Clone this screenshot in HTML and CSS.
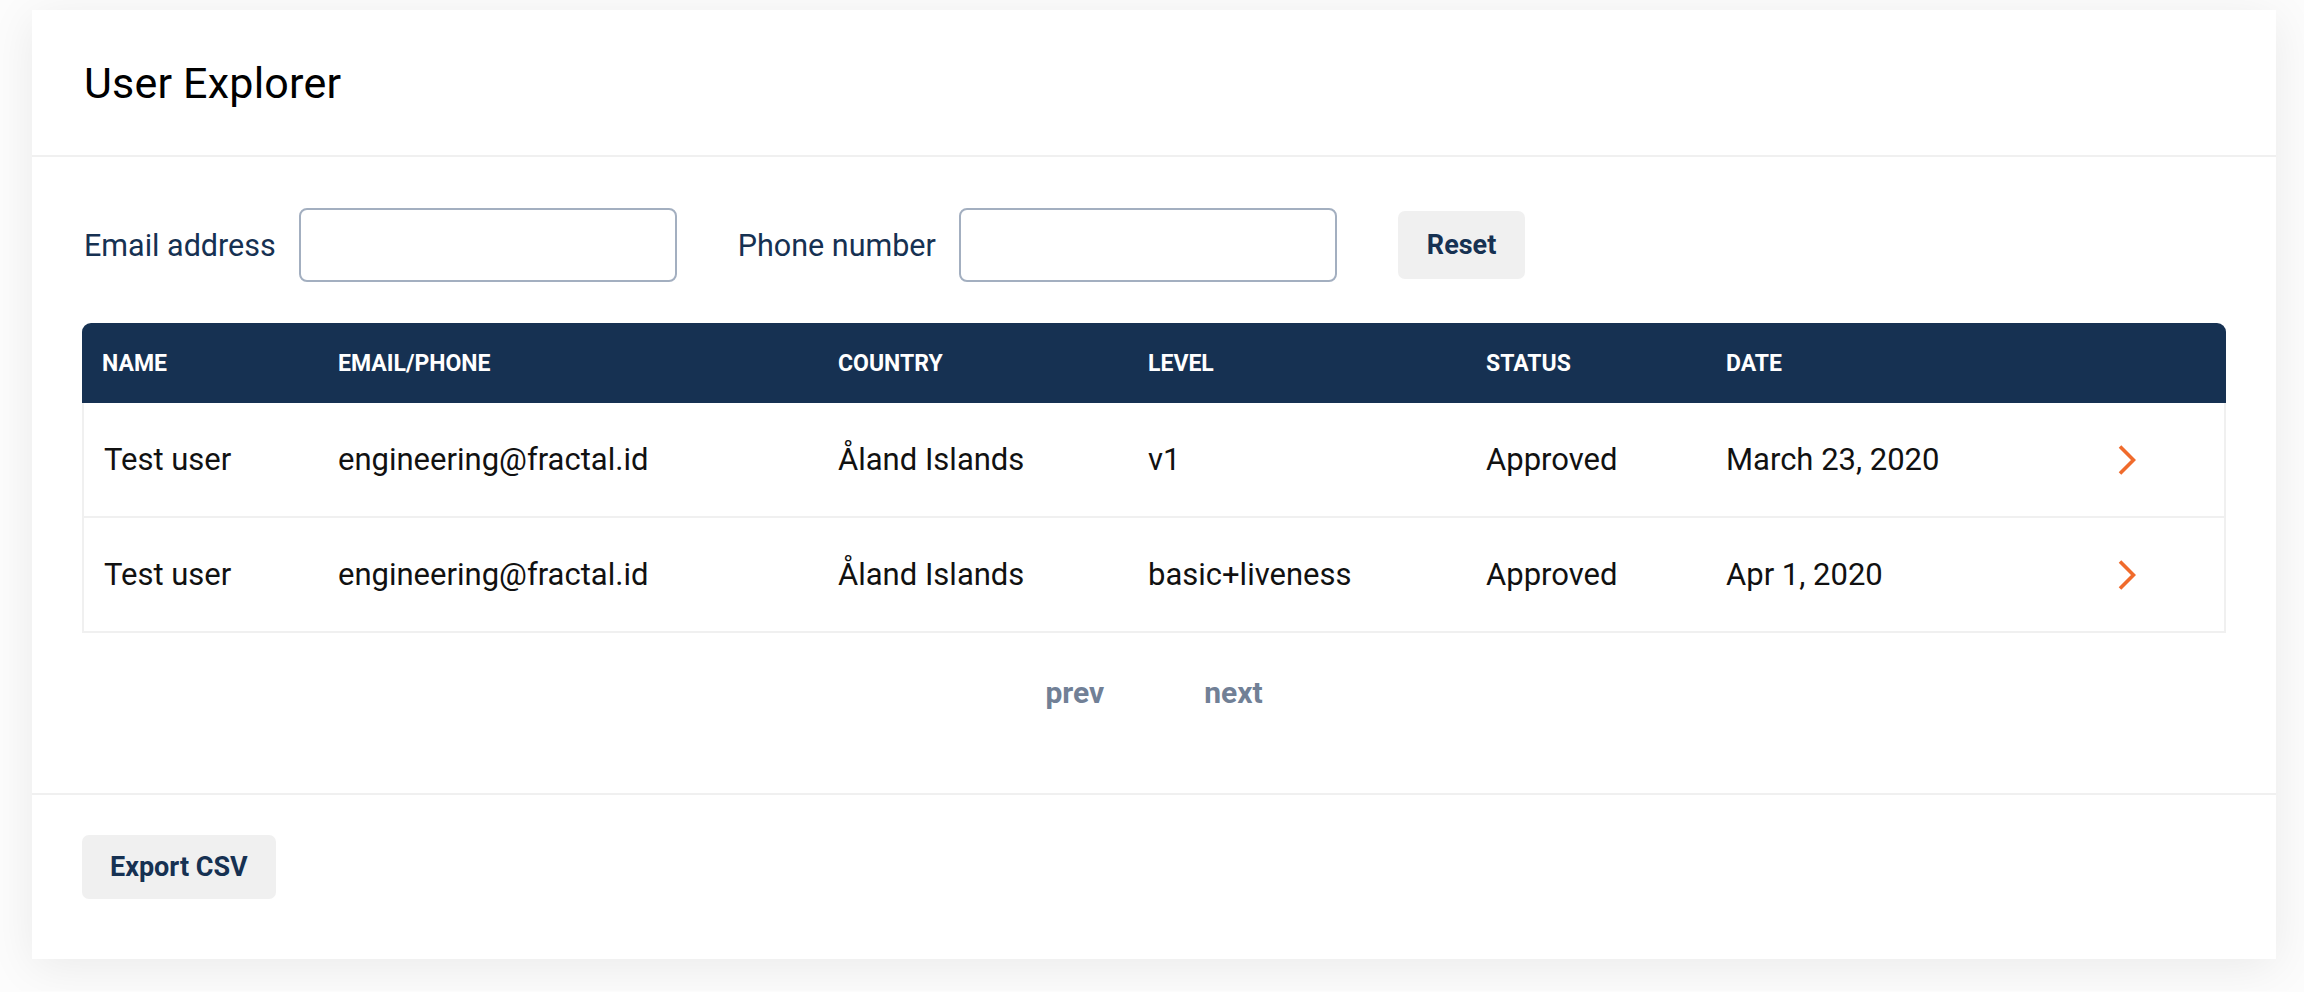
FILE: index.html
```html
<!DOCTYPE html>
<html lang="en">
<head>
<meta charset="utf-8">
<title>User Explorer</title>
<link rel="stylesheet" href="styles.css">
</head>
<body>
<div class="card">
  <header class="card-header">
    <h1 class="title">User Explorer</h1>
  </header>
  <section class="card-body">
    <form class="filters">
      <label class="field">
        <span class="field-label">Email address</span>
        <input class="field-input email" type="text">
      </label>
      <label class="field">
        <span class="field-label">Phone number</span>
        <input class="field-input" type="text">
      </label>
      <button class="btn" type="button">Reset</button>
    </form>
    <div class="table">
      <div class="thead">
        <div class="th">Name</div>
        <div class="th">Email/Phone</div>
        <div class="th">Country</div>
        <div class="th">Level</div>
        <div class="th">Status</div>
        <div class="th">Date</div>
        <div class="th"></div>
      </div>
      <div class="tr">
        <div class="td">Test user</div>
        <div class="td">engineering@fractal.id</div>
        <div class="td">Åland Islands</div>
        <div class="td">v1</div>
        <div class="td">Approved</div>
        <div class="td">March 23, 2020</div>
        <div class="td"><svg class="chev" viewBox="0 0 18 30" width="18" height="30"><polyline points="2,1.5 15.5,15 2,28.5" fill="none" stroke="#f06b2c" stroke-width="3.6" stroke-linecap="butt" stroke-linejoin="miter"/></svg></div>
      </div>
      <div class="tr">
        <div class="td">Test user</div>
        <div class="td">engineering@fractal.id</div>
        <div class="td">Åland Islands</div>
        <div class="td">basic+liveness</div>
        <div class="td">Approved</div>
        <div class="td">Apr 1, 2020</div>
        <div class="td"><svg class="chev" viewBox="0 0 18 30" width="18" height="30"><polyline points="2,1.5 15.5,15 2,28.5" fill="none" stroke="#f06b2c" stroke-width="3.6" stroke-linecap="butt" stroke-linejoin="miter"/></svg></div>
      </div>
    </div>
    <nav class="pager">
      <span class="pager-link">prev</span>
      <span class="pager-link">next</span>
    </nav>
  </section>
  <footer class="card-footer">
    <button class="btn btn-export" type="button">Export CSV</button>
  </footer>
</div>
</body>
</html>
```
FILE: styles.css
```css
* { box-sizing: border-box; }

html, body {
  margin: 0;
  padding: 0;
  background: #fcfcfc;
  font-family: Roboto, "Liberation Sans", Arial, sans-serif;
  color: #111;
}

body {
  padding: 10px 28px 32px 32px;
}

.card {
  width: 2244px;
  background: #fff;
  box-shadow: 0 8px 44px rgba(0, 0, 0, 0.075);
}

.card-header {
  height: 147px;
  display: flex;
  align-items: center;
  padding: 0 52px;
  border-bottom: 2px solid #f0f0f0;
}

.title {
  margin: 0;
  font-size: 43px;
  font-weight: 400;
  color: #000;
  letter-spacing: 0.2px;
}

.card-body {
  padding: 51px 50px 0 50px;
  height: 638px;
  border-bottom: 2px solid #f0f0f0;
}

.filters {
  display: flex;
  align-items: center;
  height: 74px;
  margin: 0 0 41px 0;
  padding-left: 2px;
}

.field {
  display: flex;
  align-items: center;
  gap: 23px;
  margin-right: 61px;
}

.field-label {
  font-size: 30.5px;
  color: #163152;
}

.field-input {
  width: 378px;
  height: 74px;
  border: 2px solid #a3afc0;
  border-radius: 8px;
  background: #fff;
  font: inherit;
  outline: none;
}

.btn {
  height: 68px;
  padding: 0 29px;
  border: none;
  border-radius: 7px;
  background: #f0f0f0;
  font-family: Roboto, "Liberation Sans", Arial, sans-serif;
  font-size: 27px;
  font-weight: 700;
  color: #163152;
}

.table {
  width: 2144px;
}

.thead,
.tr {
  display: grid;
  align-items: center;
}

.thead {
  grid-template-columns: 236px 500px 310px 338px 240px 392px 1fr;
  height: 80px;
  background: #163152;
  border-radius: 9px 9px 0 0;
}

.th {
  padding-left: 20px;
  font-size: 23px;
  font-weight: 700;
  text-transform: uppercase;
  color: #fff;
}

.tr {
  grid-template-columns: 234px 500px 310px 338px 240px 392px 1fr;
  height: 115px;
  border-left: 2px solid #f0f0f0;
  border-right: 2px solid #f0f0f0;
  border-bottom: 2px solid #f0f0f0;
}

.td {
  padding-left: 20px;
  font-size: 31px;
  color: #111;
  white-space: nowrap;
}

.chev {
  display: block;
  margin-top: 1px;
}

.pager {
  display: flex;
  justify-content: center;
  gap: 100px;
  margin-top: 39px;
  height: 40px;
  align-items: center;
}

.pager-link {
  font-size: 30px;
  font-weight: 700;
  color: #718096;
}

.card-footer {
  padding: 40px 50px 60px 50px;
}

.btn-export {
  height: 64px;
  padding: 0 28px;
}
```
